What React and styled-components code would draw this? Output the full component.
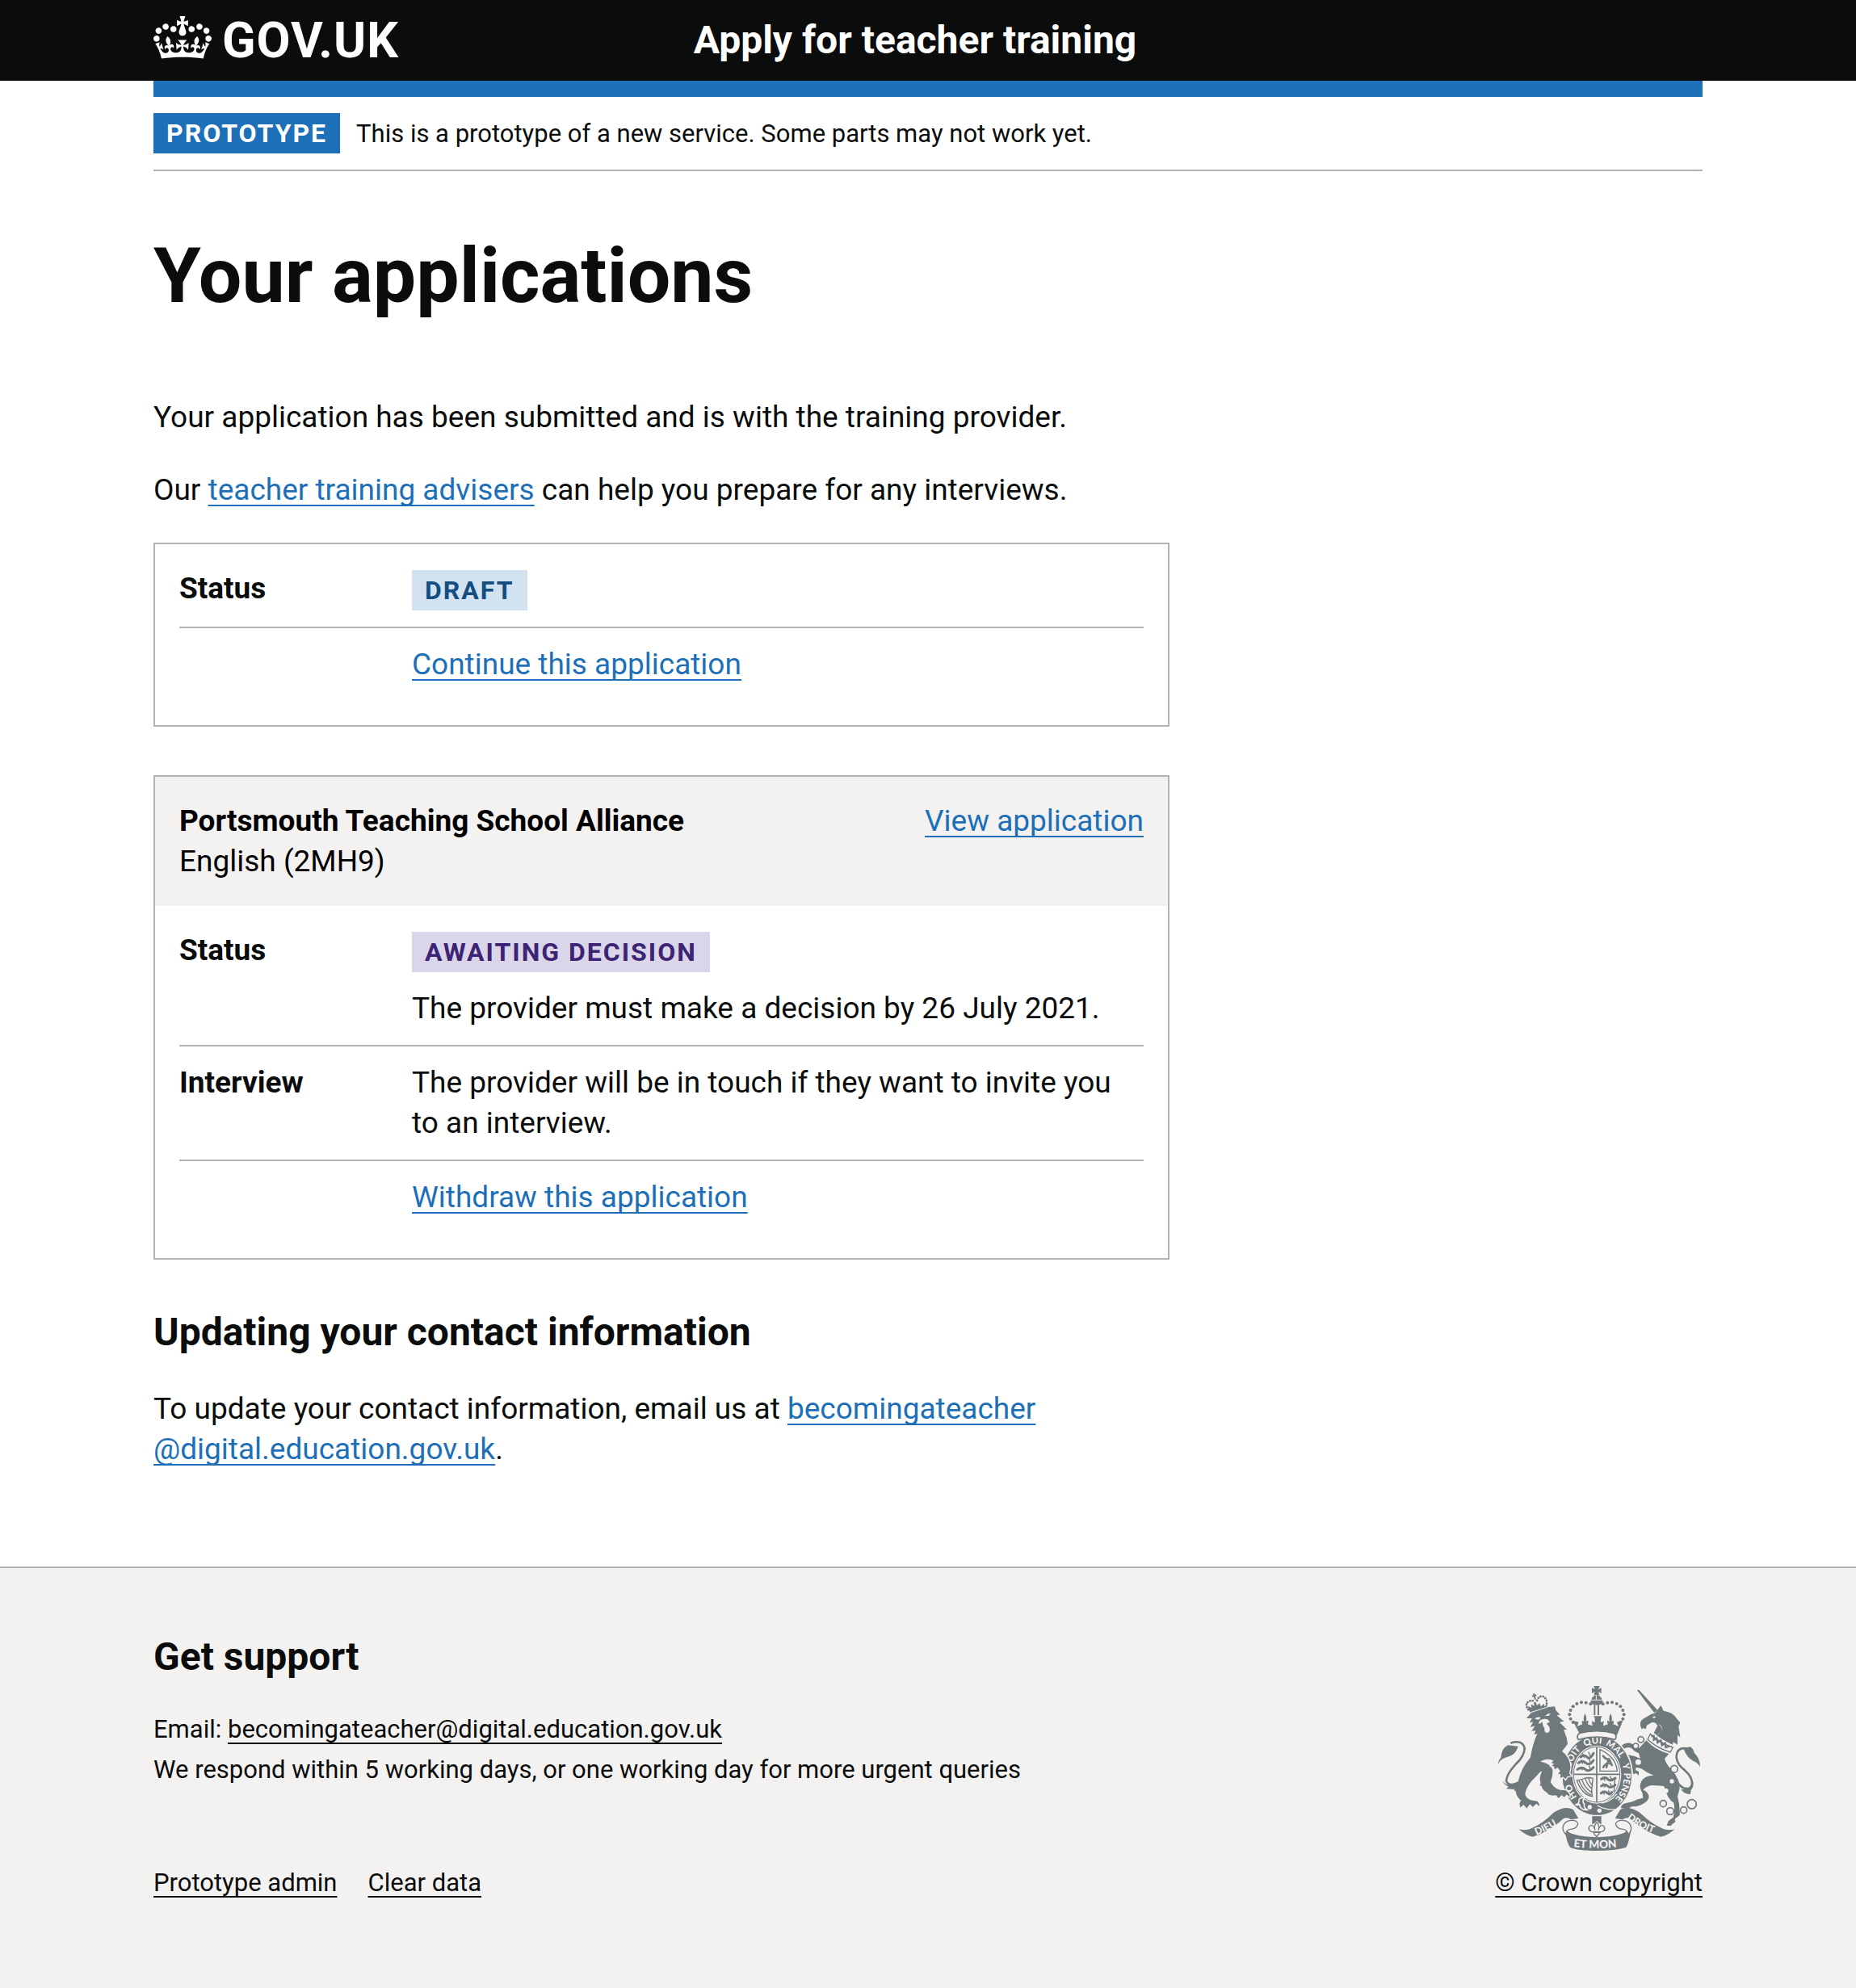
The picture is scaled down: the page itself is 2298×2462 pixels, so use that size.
import React from 'react';
import styled, { createGlobalStyle } from 'styled-components';

const colours = {
  black: '#0b0c0c',
  blue: '#1d70b8',
  border: '#b1b4b6',
  grey: '#f3f2f1',
  crest: '#6f787b',
};

const GlobalStyle = createGlobalStyle`
  *, *::before, *::after { box-sizing: border-box; }
  body {
    margin: 0;
    background: ${colours.grey};
    color: ${colours.black};
    font-family: Roboto, "Liberation Sans", Arial, sans-serif;
    font-size: 37px;
    line-height: 50px;
  }
`;

const Page = styled.div`
  background: #fff;
`;

const Container = styled.div`
  max-width: 1918px;
  margin: 0 auto;
`;

const Link = styled.a`
  color: ${(p) => (p.$plain ? colours.black : colours.blue)};
  text-decoration: underline;
  text-decoration-thickness: 2px;
  text-underline-offset: 6px;
  text-decoration-skip-ink: none;
`;

const Header = styled.header`
  background: ${colours.black};
  color: #fff;
  font-weight: 700;
  line-height: 60px;
`;

const HeaderRow = styled(Container)`
  display: grid;
  grid-template-columns: 1fr 2fr;
  column-gap: 44px;
  padding: 20px 0;
`;

const Logo = styled.a`
  display: flex;
  align-items: flex-start;
  gap: 13px;
  color: inherit;
  font-size: 61px;
  letter-spacing: 1px;
  text-decoration: none;
`;

const Crown = styled.svg`
  width: 72px;
  height: 53px;
  fill: currentColor;
`;

const ServiceName = styled.a`
  justify-self: start;
  color: inherit;
  font-size: 48px;
  text-decoration: none;
`;

const BlueBar = styled.div`
  height: 20px;
  background: ${colours.blue};
`;

const PhaseBanner = styled.div`
  display: flex;
  align-items: baseline;
  gap: 20px;
  padding: 20px 0;
  border-bottom: 2px solid ${colours.border};
`;

const tagTones = {
  solid: `background: ${colours.blue}; color: #fff;`,
  blue: 'background: #d2e2f1; color: #144e81;',
  purple: 'background: #dbd5e9; color: #3d2375;',
};

const Tag = styled.strong`
  display: block;
  width: fit-content;
  padding: 9px 16px;
  font-size: 32px;
  line-height: 32px;
  letter-spacing: 2px;
  text-transform: uppercase;
  ${(p) => tagTones[p.$tone]}
`;

const Small = styled.p`
  margin: 0;
  font-size: 31px;
  line-height: 40px;
`;

const Main = styled.main`
  width: 1258px;
  max-width: 100%;
  padding: 80px 0 120px;
`;

const Title = styled.h1`
  margin: 0 0 100px;
  font-size: 95px;
  line-height: 100px;
`;

const Heading = styled.h2`
  margin: 0 0 40px;
  font-size: 48px;
  line-height: 60px;
`;

const Paragraph = styled.p`
  margin: 0 0 40px;
  &:last-child { margin-bottom: 0; }
`;

const Card = styled.section`
  margin-bottom: 60px;
  border: 2px solid ${colours.border};
`;

const CardHeader = styled.header`
  display: flex;
  justify-content: space-between;
  padding: 30px;
  background: ${colours.grey};
  color: #000;
`;

const CourseName = styled.h3`
  margin: 0;
  font-size: inherit;
  font-weight: 700;
`;

const CourseDetail = styled.span`
  display: block;
  font-weight: 400;
`;

const SummaryList = styled.dl`
  margin: 0;
  padding: 10px 30px 30px;
`;

const SummaryRow = styled.div`
  display: grid;
  grid-template-columns: 288px 1fr;
  padding: 20px 0;
  &:not(:last-child) { border-bottom: 2px solid ${colours.border}; }
`;

const Key = styled.dt`
  font-weight: 700;
`;

const Value = styled.dd`
  grid-column: 2;
  margin: 0;
  padding-right: 40px;
  ${Tag} { margin-top: 2px; }
  ${Tag} + p { margin-top: 20px; }
`;

const ValueText = styled.p`
  margin: 0;
`;

const Footer = styled.footer`
  padding: 80px 0 110px;
  border-top: 2px solid ${colours.border};
  background: ${colours.grey};
`;

const FooterRow = styled(Container)`
  display: flex;
  align-items: flex-end;
  justify-content: space-between;
`;

const SupportList = styled.ul`
  display: grid;
  gap: 10px;
  margin: 0 0 100px;
  padding: 0;
  list-style: none;
`;

const FooterLinks = styled.ul`
  display: flex;
  gap: 38px;
  margin: 0;
  padding: 0;
  list-style: none;
`;

const Copyright = styled.div`
  display: grid;
  justify-items: center;
  gap: 20px;
`;

const Crest = styled.svg`
  width: 250px;
  height: 204px;
  font-family: Lato, "Liberation Sans", sans-serif;
  font-weight: 900;
`;

function CrownLogo() {
  return (
    <Crown viewBox="0 0 132 97" aria-hidden="true">
      <path
        fillRule="evenodd"
        d="M25 30.2c3.5 1.5 7.7-.2 9.1-3.7 1.5-3.6-.2-7.8-3.9-9.2-3.6-1.4-7.6.3-9.1 3.9-1.4 3.5.3 7.5 3.9 9zM9 39.5c3.6 1.5 7.8-.2 9.2-3.7 1.5-3.6-.2-7.8-3.9-9.1-3.6-1.5-7.6.2-9.1 3.8-1.4 3.5.3 7.5 3.8 9zM4.4 57.2c3.5 1.5 7.7-.2 9.1-3.8 1.5-3.6-.2-7.7-3.9-9.1-3.5-1.5-7.6.3-9.1 3.8-1.4 3.5.3 7.6 3.9 9.1zm38.3-21.4c3.5 1.5 7.7-.2 9.1-3.8 1.5-3.6-.2-7.7-3.9-9.1-3.6-1.5-7.6.3-9.1 3.8-1.3 3.6.4 7.7 3.9 9.1zm64.4-5.6c-3.6 1.5-7.8-.2-9.1-3.7-1.5-3.6.2-7.8 3.8-9.2 3.6-1.4 7.7.3 9.2 3.9 1.3 3.5-.4 7.5-3.9 9zm15.9 9.3c-3.6 1.5-7.7-.2-9.1-3.7-1.5-3.6.2-7.8 3.7-9.1 3.6-1.5 7.7.2 9.2 3.8 1.5 3.5-.3 7.5-3.8 9zm4.7 17.7c-3.6 1.5-7.8-.2-9.2-3.8-1.5-3.6.2-7.7 3.9-9.1 3.6-1.5 7.7.3 9.2 3.8 1.3 3.5-.4 7.6-3.9 9.1zM89.3 35.8c-3.6 1.5-7.8-.2-9.2-3.8-1.4-3.6.2-7.7 3.9-9.1 3.6-1.5 7.7.3 9.2 3.8 1.4 3.6-.3 7.7-3.9 9.1zM69.7 17.7l8.9 4.7V9.3l-8.9 2.8c-.2-.3-.5-.6-.9-.9L72.4 0H59.6l3.5 11.2c-.3.3-.6.5-.9.9l-8.8-2.8v13.1l8.8-4.7c.3.3.6.7.9.9l-5 15.4v.1c-.2.8-.4 1.6-.4 2.4 0 4.1 3.1 7.5 7 8.1h.2c.3 0 .7.1 1 .1.4 0 .7 0 1-.1h.2c4-.6 7.1-4.1 7.1-8.1 0-.8-.1-1.7-.4-2.4V34l-5.1-15.4c.4-.2.7-.6 1-.9zM66 92.8c16.9 0 32.8 1.1 47.1 3.2 4-16.9 8.9-26.7 14-33.5l-9.6-3.4c1 4.9 1.1 7.2 0 10.2-1.5-1.4-3-4.3-4.2-8.7L108.6 76c2.8-2 5-3.2 7.5-3.3-4.4 9.4-10 11.9-13.6 11.2-4.3-.8-6.3-4.6-5.6-7.9 1-4.7 5.7-5.9 8-.5 4.3-8.7-3-11.4-7.6-8.8 7.1-7.2 7.9-13.5 2.1-21.1-8 6.1-8.1 12.3-4.5 20.8-4.7-5.4-12.1-2.5-9.5 6.2 3.4-5.2 7.9-2 7.2 3.1-.6 4.3-6.4 7.8-13.5 7.2-10.3-.9-10.9-8-11.2-13.8 2.5-.5 7.1 1.8 11 7.3L80.2 60c-4.1 4.4-8 5.3-12.3 5.4 1.4-4.4 8-11.6 8-11.6H55.5s6.4 7.2 7.9 11.6c-4.2-.1-8-1-12.3-5.4l1.4 16.4c3.9-5.5 8.5-7.7 10.9-7.3-.3 5.8-.9 12.8-11.1 13.8-7.2.6-12.9-2.9-13.5-7.2-.7-5 3.8-8.3 7.1-3.1 2.7-8.7-4.6-11.6-9.4-6.2 3.7-8.5 3.6-14.7-4.6-20.8-5.8 7.6-5 13.9 2.2 21.1-4.7-2.6-11.9.1-7.7 8.8 2.3-5.5 7.1-4.2 8.1.5.7 3.3-1.3 7.1-5.7 7.9-3.5.7-9-1.8-13.5-11.2 2.5.1 4.7 1.3 7.5 3.3l-4.7-15.4c-1.2 4.4-2.7 7.2-4.3 8.7-1.1-3-.9-5.3 0-10.2l-9.5 3.4c5 6.9 9.9 16.7 14 33.5 14.8-2.1 30.8-3.2 47.7-3.2z"
      />
    </Crown>
  );
}

const crownBeads = [
  [23, 121], [40, 116], [57, 115], [74, 120], [88, 130], [97, 144], [101, 160], [97, 176], [88, 189],
];
const chainRings = [
  [602, 253, 11], [583, 277, 10], [592, 337, 13], [726, 362, 13],
  [685, 491, 12], [711, 519, 13], [761, 515, 12], [791, 493, 17],
];
const garterWords = [
  ['HO', 86], ['SOIT', 201], ['QUI', 296], ['MAL', 374], ['Y', 472], ['PENSE', 505],
];

function RoyalArms() {
  const ink = colours.crest;
  const paper = colours.grey;
  return (
    <Crest viewBox="72 54 750 612" fill={ink} role="img" aria-label="Royal coat of arms">
      {/* unicorn */}
      <path d="M588 70q4-4 10 2l66 72-12 10z" />
      <path d="M600 190q4-12 18-18 18-14 38-18l20-28 10 20q34 4 50 30l12 14-6 14 6 40-10-8 0 36-16-10-2 10q-44-20-70-44l14-26q-8-16-22-12l-18 10-4 14-10-4-4 6-6-14z" />
      <path d="M644 170q6-6 14-2-4 8-14 2M668 196q14 10 10 26l-20 18q22-16 22-28 0-12-12-16z" fill={paper} />
      <path d="M637 232q34 34 84 50l-10 18q-54-18-84-48z" fill={paper} stroke={ink} strokeWidth="4" />
      <path d="M640 240l10 0 0 14 10-6 4 16 12-8 4 18 12-8 2 16 14-4" fill="none" stroke={ink} strokeWidth="7" />
      <path d="M622 256q32 36 84 50l-16 18q6 22 30 46 26 30 26 64l-8 30q10 34 8 70l-18 14 2 10-18 16-14-2 6-16 18-14q8-26 2-54-24-14-36-62-14-2-32-2-28-4-46 16 20 6 22 28-8 24-50 34-16-4-26 8l-28-2q0-14 16-18l26-6q18-10 40-14l-2-18q-16-22-4-44 12-22 46-22-24-8-44-24-10-4-22-6l-2 10 12 6 0 14-10-8-10 4-4-10q-16-8-26-26l-8-22 18-14q24 2 46 14l-6-20q-16-6-28-20-18-6-30 8l-8-14q14-14 34-12 18 4 34 18z" />
      <circle cx="717" cy="408" r="8" fill={paper} />
      <circle cx="695" cy="443" r="9" fill={paper} />
      {chainRings.map(([x, y, r]) => (
        <circle key={x} cx={x} cy={y} r={r} fill={paper} stroke={ink} strokeWidth="5" />
      ))}
      <path d="M770 286q-36-6-36 34 4 28 32 48 28 24 26 52-6 22-34 12-16-10-24-26" fill="none" stroke={ink} strokeWidth="8" />
      <path d="M760 284l26-4q12 8 14 22 22 20 22 52-12-18-26-22-26-14-36-48zM796 408q4 22-8 32l-2 16q-22 0-36-18 18 2 34-6z" />

      {/* garter and shield */}
      <ellipse cx="439" cy="386" rx="131" ry="150" stroke={paper} strokeWidth="5" />
      <ellipse cx="438" cy="383" rx="91" ry="108" fill={paper} />
      <ellipse cx="438" cy="383" rx="86" ry="103" fill="none" stroke={ink} strokeWidth="3" />
      <path d="M438 280v206M352 382h172" stroke={ink} strokeWidth="5" fill="none" />
      <g stroke={ink} fill="none" strokeLinecap="round">
        <path strokeWidth="9" d="M378 318q14-12 24 0t24-14M370 340q14-12 28 0t28-10M366 364q16-12 30 0t30-8" />
        <path strokeWidth="4" d="M386 306l6 14M408 300l6 14M382 330l4 12M410 326l4 12M380 356l4 10M410 352l4 10M414 366l8-6" />
        <path strokeWidth="9" d="M455 400q14-10 24 0t28-4M455 426q14-10 24 0t28-4M454 452q14-10 24 0t16-4" />
        <path strokeWidth="4" d="M462 392l6 14M488 390l6 14M462 416l6 14M488 416l6 14M460 444l6 12M482 442l4 14M506 396l-4 50" />
        <path strokeWidth="4" d="M450 290v80h64q-4-52-64-80z" />
        <path strokeWidth="8" d="M462 314q8 12 22 12l10 22M462 356q10-18 24-14M482 326l-8 30" />
        <path strokeWidth="4" d="M364 404q20-2 30-8 18-4 30 2-8 50-2 66-40-6-58-60zM372 406q18 42 44 52M384 404q10 30 34 44M396 400q8 24 24 36M408 398q4 16 14 26" />
      </g>
      <path d="M457 489q32-4 56-34M506 512q-34 4-66-14" fill="none" stroke={paper} strokeWidth="4" />
      <path d="M392 470q-22-4-20 14-2 12-14 10 14 6 16-2 2 24 28 22-14-8-10-22-10-8 0-22z" fill={ink} stroke={paper} strokeWidth="5" />
      <circle cx="412" cy="504" r="8" fill={paper} />
      <circle cx="448" cy="517" r="8" fill={paper} />
      <path id="garter-line" fill="none" d="M439 504A100 118 0 0 1 439 268A100 118 0 0 1 439 504" />
      {garterWords.map(([word, offset]) => (
        <text key={word} fill={paper} fontSize="34">
          <textPath href="#garter-line" startOffset={offset}>{word}</textPath>
        </text>
      ))}

      {/* crown */}
      <path d="M427 54h22l-5 12 11-5v20l-11-5 4 12h-21l4-12-11 5V61l11 5z" />
      <path d="M418 106q4-17 20-18 16 1 20 18l4 9q-8 10-24 10t-24-10z" />
      <path d="M436 88v17M418 106h40" stroke={paper} strokeWidth="3" />
      {crownBeads.map(([dx, y]) => (
        <g key={dx + y}>
          <circle cx={438 - dx} cy={y} r="6" />
          <circle cx={438 + dx} cy={y} r="6" />
        </g>
      ))}
      <path d="M427 124h6v38h-6zM441 124h6v38h-6z" />
      <path d="M349 183l22 5-6 16 20-8q-5-8 0-14l6 4q-4-12 3-30 9 16 4 30l8-4q4 8-2 14l18 6-2-18 10 6q4-14-4-24h32q-8 10-4 24l10-6-2 18 18-6q-6-6-2-14l8 4q-5-14 4-30 7 18 3 30l6-4q5 6 0 14l20 8-6-16 22-5-22 54q-66-18-136 0z" />
      <path d="M374 229q64-16 128 0 14 10 4 24-68-20-136 0-10-12 4-24z" fill={paper} stroke={ink} strokeWidth="5" />

      {/* lion */}
      <path
        stroke={paper}
        strokeWidth="4"
        d="M172 176l20-22 66-24 26-2 4 16 18 18-12 2 26 22-16 4 26 26-12 2q12 26 14 52-10 14-20 26 30 24 30 62l-4 20 8 10-16 4-8 12-8-10-14 4 2-14-10-4 8-10-8-10-12 8-2-14-12-2 10-8-10-4 8-8q-22-8-40 2 34 8 42 30 2 24-8 46 14 24 34 28l22 2q20 14 14 28l-12-8-8 10-10-8-12 12-10-12q-26 4-34-10-20-14-20-24l-8-4 4-10q-8-18 4-42-14 16-34 36-20 24-24 46 2 16 20 22l24 4q12 12 8 24l-12-10-14 12-10-10-12 16-12-14-12 10q-10-16 0-28-18-16-18-32l-8-8 8-10-10-14 18-8q10-48 46-90 8-50 24-84l-12 4 6-16-16 2 12-18-16 4 10-20-14 4 10-18z"
      />
      <path d="M206 176q14-10 24-4-8 12-18 4M246 164q12-10 20-8-4 12-16 8M236 186q-8 10-14 8 2-14 14-16 14-4 22 2l6 10q-10 0-12 4 12 10 12 22-2 14-14 12-8-4-6-18-8-8-8-24z" fill={paper} />
      <path d="M190 146l62-18 2 8-62 20zM182 130l14 4-2-12 12 6-2-14h8l4 12 10-8 4 12 12-10 4 16-56 16z" />
      <path d="M186 154l70-22" fill="none" stroke={paper} strokeWidth="3" />
      <g fill="none" stroke={ink} strokeWidth="8" strokeDasharray="1 9" strokeLinecap="round">
        <path d="M184 142q-16-22 4-32 10-4 18 2M216 108q6-16 20-16 22 8 14 38" />
      </g>
      <path d="M198 92l16-4M204 82l6 22" stroke={ink} strokeWidth="6" />
      <path d="M118 266q42-14 52 18 0 30-34 62-32 34-34 60 6 20 34 12 26-8 44-34" fill="none" stroke={ink} strokeWidth="8" />
      <path d="M72 344q0-14 10-24 2-34 26-46l38 4q-8 28-30 36-20 6-30 12-10 6-14 18zM88 406q10 16 28 16l42-16q-14 32-30 32-14-2-26-2l8-8q-16-6-22-22z" />

      {/* motto */}
      <path d="M324 586q10 26 114 30 106-4 116-30l12 2q-12 60-20 66-42 12-108 12-70 0-98-12-14-16-20-66z" />
      <path d="M148 586q30 8 56-8 34-14 74-54 40-26 72-12l20 34-28 4q-22-16-40 8-56 44-102 56-22-2-52-28z" />
      <path d="M728 586q-30 8-56-8-34-14-74-54-40-26-72-12l-20 34 28 4q22-16 40 8 56 44 102 56 22-2 52-28z" />
      <g fill={paper} stroke={ink} strokeWidth="4">
        <path d="M312 580q4-22 26-26 26-4 30 12-4 20-28 20-18 4-16 20-12-10-12-26z" />
        <path d="M566 580q-4-22-26-26-26-4-32 12 4 20 28 20 18 4 18 20 12-10 12-26z" />
        <path d="M438 560q12 14 6 30 6-24 20-16 10 14-8 22h-36q-18-8-8-22 14-8 20 16-6-16 6-30zM426 598h24l-6 8-6 8-8-8z" />
      </g>
      <path d="M421 538h34v30q-10-4-16-14-8 10-18 14z" />
      <path id="motto-left" fill="none" d="M214 608Q268 588 318 549" />
      <path id="motto-mid" fill="none" d="M352 652Q438 662 528 651" />
      <path id="motto-right" fill="none" d="M550 546Q600 588 674 608" />
      <g fill={paper} fontSize="36">
        <text><textPath href="#motto-left">DIEU</textPath></text>
        <text fontSize="41"><textPath href="#motto-mid">ET MON</textPath></text>
        <text><textPath href="#motto-right">DROIT</textPath></text>
      </g>
    </Crest>
  );
}

export default function App() {
  return (
    <>
      <GlobalStyle />
      <Page>
        <Header>
          <HeaderRow>
            <Logo href="#">
              <CrownLogo />
              <span>GOV.UK</span>
            </Logo>
            <ServiceName href="#">Apply for teacher training</ServiceName>
          </HeaderRow>
        </Header>

        <Container>
          <BlueBar />
          <PhaseBanner>
            <Tag $tone="solid">Prototype</Tag>
            <Small>This is a prototype of a new service. Some parts may not work yet.</Small>
          </PhaseBanner>

          <Main>
            <Title>Your applications</Title>
            <Paragraph>Your application has been submitted and is with the training provider.</Paragraph>
            <Paragraph>
              Our <Link href="#">teacher training advisers</Link> can help you prepare for any interviews.
            </Paragraph>

            <Card>
              <SummaryList>
                <SummaryRow>
                  <Key>Status</Key>
                  <Value><Tag $tone="blue">Draft</Tag></Value>
                </SummaryRow>
                <SummaryRow>
                  <Value><Link href="#">Continue this application</Link></Value>
                </SummaryRow>
              </SummaryList>
            </Card>

            <Card>
              <CardHeader>
                <CourseName>
                  Portsmouth Teaching School Alliance
                  <CourseDetail>English (2MH9)</CourseDetail>
                </CourseName>
                <div>
                  <Link href="#">View application</Link>
                </div>
              </CardHeader>
              <SummaryList>
                <SummaryRow>
                  <Key>Status</Key>
                  <Value>
                    <Tag $tone="purple">Awaiting decision</Tag>
                    <ValueText>The provider must make a decision by 26 July 2021.</ValueText>
                  </Value>
                </SummaryRow>
                <SummaryRow>
                  <Key>Interview</Key>
                  <Value>The provider will be in touch if they want to invite you to an interview.</Value>
                </SummaryRow>
                <SummaryRow>
                  <Value><Link href="#">Withdraw this application</Link></Value>
                </SummaryRow>
              </SummaryList>
            </Card>

            <Heading>Updating your contact information</Heading>
            <Paragraph>
              To update your contact information, email us at{' '}
              <Link href="mailto:becomingateacher@digital.education.gov.uk">
                becomingateacher<wbr />@digital.education.gov.uk
              </Link>
              .
            </Paragraph>
          </Main>
        </Container>

        <Footer>
          <FooterRow>
            <div>
              <Heading>Get support</Heading>
              <SupportList>
                <li>
                  <Small>
                    Email:{' '}
                    <Link $plain href="mailto:becomingateacher@digital.education.gov.uk">
                      becomingateacher@digital.education.gov.uk
                    </Link>
                  </Small>
                </li>
                <li>
                  <Small>We respond within 5 working days, or one working day for more urgent queries</Small>
                </li>
              </SupportList>
              <FooterLinks>
                <li><Small><Link $plain href="#">Prototype admin</Link></Small></li>
                <li><Small><Link $plain href="#">Clear data</Link></Small></li>
              </FooterLinks>
            </div>
            <Copyright>
              <RoyalArms />
              <Small><Link $plain href="#">© Crown copyright</Link></Small>
            </Copyright>
          </FooterRow>
        </Footer>
      </Page>
    </>
  );
}
